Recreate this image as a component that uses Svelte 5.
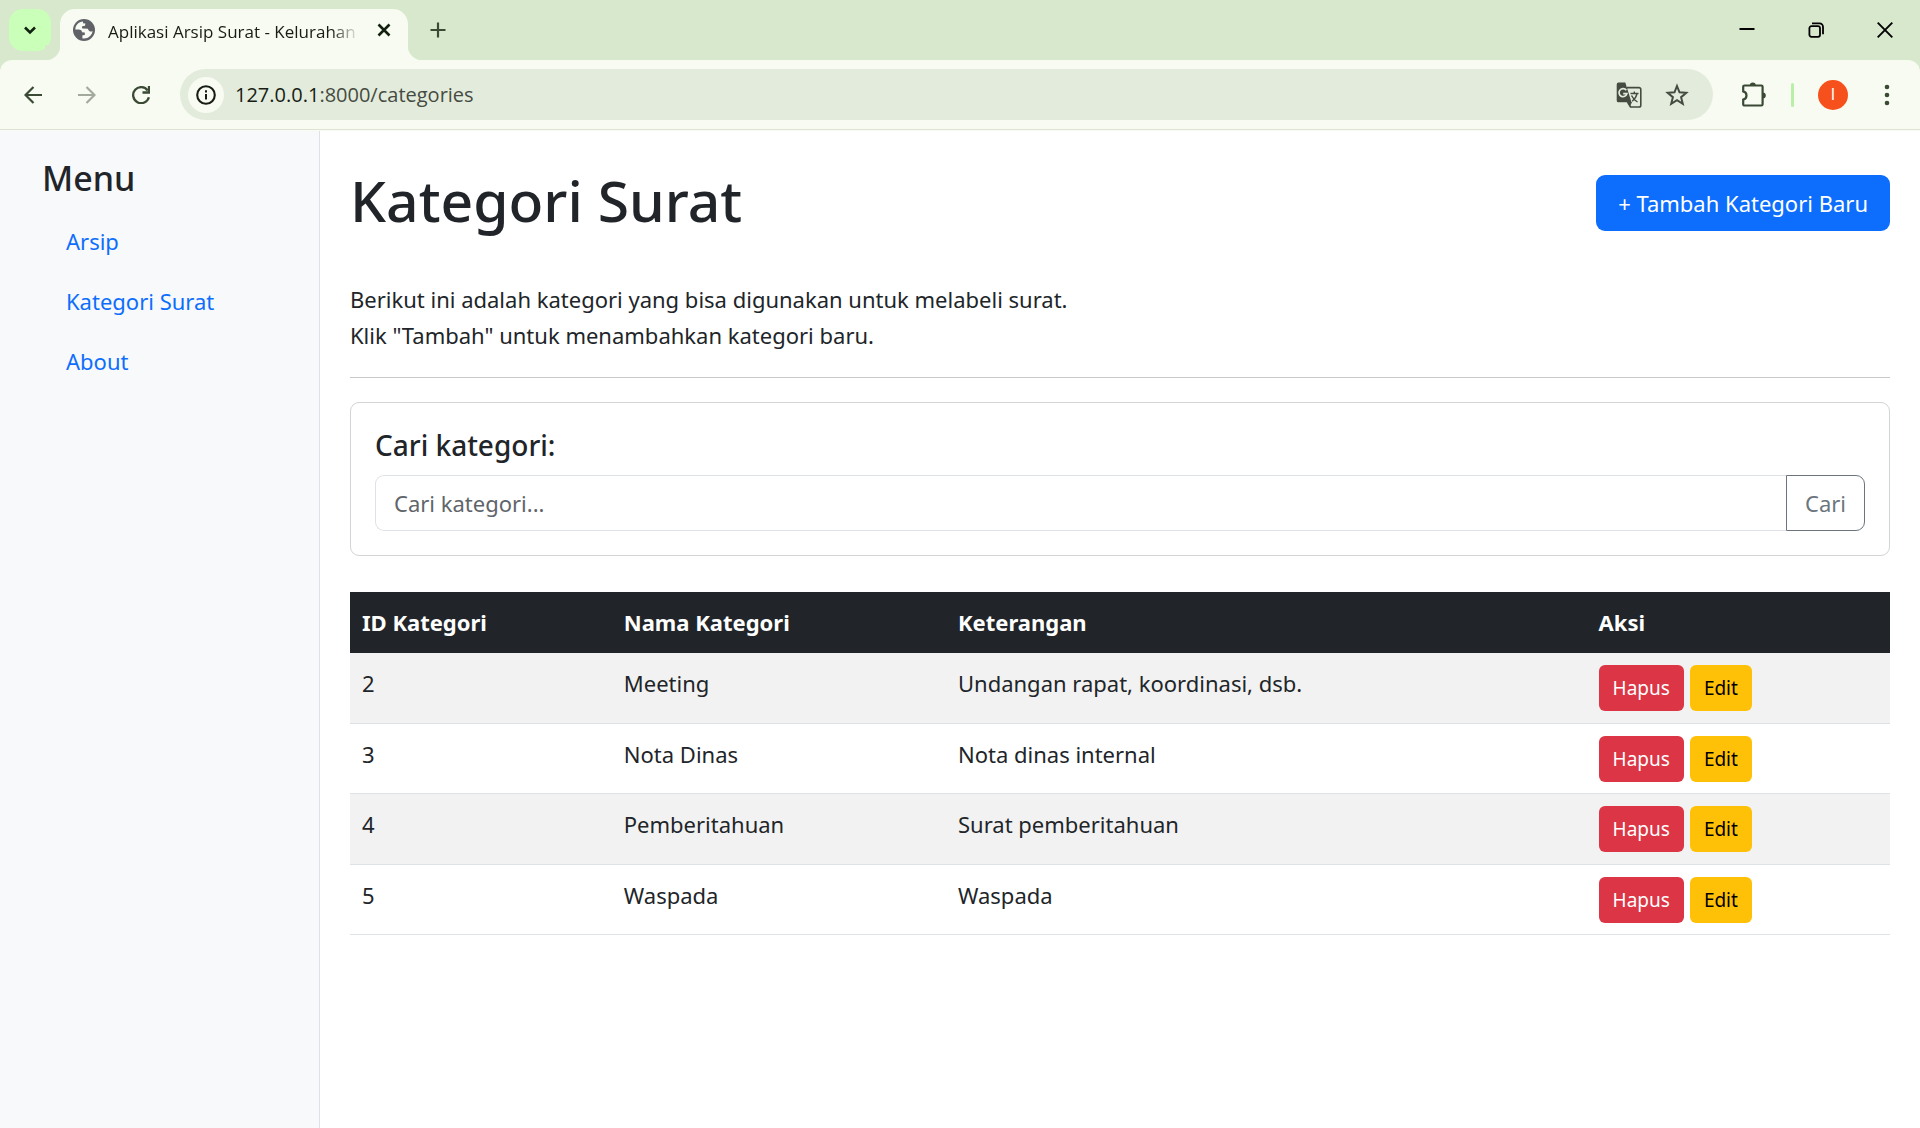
<script>
  const menu = [
    { label: 'Arsip', href: '#arsip' },
    { label: 'Kategori Surat', href: '#categories' },
    { label: 'About', href: '#about' },
  ];

  const categories = [
    { id: 2, name: 'Meeting', note: 'Undangan rapat, koordinasi, dsb.' },
    { id: 3, name: 'Nota Dinas', note: 'Nota dinas internal' },
    { id: 4, name: 'Pemberitahuan', note: 'Surat pemberitahuan' },
    { id: 5, name: 'Waspada', note: 'Waspada' },
  ];

  let query = $state('');
</script>

<div class="window">
  <header class="tabstrip">
    <button class="tab-search" aria-label="Search tabs">
      <svg width="14" height="14" viewBox="0 0 14 14"><path d="M2 4.5l5 5 5-5" fill="none" stroke="#12200f" stroke-width="2.6" /></svg>
    </button>
    <div class="tab">
      <svg class="favicon" width="22" height="22" viewBox="0 0 22 22">
        <circle cx="11" cy="11" r="11" fill="#5f6368" />
        <path d="M10 2.4C5.6 2.700 2.300 6.300 2.300 10.400L5.500 10.600C7.800 10.700 9 11.500 9 13.200L11.800 13.400L11.800 16L9.500 16.200L9.300 19.300C14.500 20.300 19 16.800 19.600 12C18.200 12.900 16.500 12.600 15.600 11.200L14.800 9.800L9.800 9.500C8.800 9.300 8.600 7.800 9.400 7.200L12 6.800L12.400 4.600L10 4.300Z" fill="#f8fbf1" />
      </svg>
      <span class="tab-title">Aplikasi Arsip Surat - Kelurahan</span>
      <button class="icon" aria-label="Close tab">
        <svg width="14" height="14" viewBox="0 0 14 14"><path d="M1.500 1.500l11 11M12.500 1.500l-11 11" stroke="#12200f" stroke-width="2.600" /></svg>
      </button>
    </div>
    <button class="icon new-tab" aria-label="New tab">
      <svg width="16" height="16" viewBox="0 0 16 16"><path d="M8 .5v15M.5 8h15" stroke="#3a4a35" stroke-width="2.200" /></svg>
    </button>
    <div class="window-controls">
      <button class="icon" aria-label="Minimize">
        <svg width="16" height="16" viewBox="0 0 16 16"><path d="M.5 7h15" stroke="#000" stroke-width="2" /></svg>
      </button>
      <button class="icon" aria-label="Restore">
        <svg width="16" height="16" viewBox="0 0 16 16" fill="none" stroke="#000" stroke-width="1.800"><rect x="1.400" y="4.200" width="10.600" height="10.600" rx="2" /><path d="M4 1.400h7.600a3.400 3.400 0 0 1 3.400 3.400v7.400" /></svg>
      </button>
      <button class="icon" aria-label="Close">
        <svg width="16" height="16" viewBox="0 0 16 16"><path d="M.7.7l14.600 14.600M15.300.7L.7 15.300" stroke="#000" stroke-width="1.900" /></svg>
      </button>
    </div>
  </header>

  <div class="toolbar-back">
    <nav class="toolbar" aria-label="Browser">
      <div class="nav-buttons">
        <button class="icon" aria-label="Back">
          <svg width="18" height="18" viewBox="0 0 18 18" fill="none" stroke="#3a4a35" stroke-width="2.200"><path d="M18 9H2M9.500 1L1.500 9l8 8" /></svg>
        </button>
        <button class="icon" aria-label="Forward">
          <svg width="18" height="18" viewBox="0 0 18 18" fill="none" stroke="#a3aa9d" stroke-width="2.200"><path d="M0 9h16M8.500 1l8 8-8 8" /></svg>
        </button>
        <button class="icon" aria-label="Reload">
          <svg width="18" height="18" viewBox="0 0 18 18" fill="none" stroke="#3a4a35" stroke-width="2.300"><path d="M15.700 4.500A8 8 0 1 0 16.900 11.200" /><path d="M17 0v6.500h-6.500" /></svg>
        </button>
      </div>
      <div class="address">
        <button class="site-info" aria-label="Site information">
          <svg width="20" height="20" viewBox="0 0 20 20"><circle cx="10" cy="10" r="8.800" fill="none" stroke="#171d14" stroke-width="2.100" /><path d="M10 9v5.500M10 5.300v2.200" stroke="#171d14" stroke-width="2" /></svg>
        </button>
        <span class="url"><span class="host">127.0.0.1</span>:8000/categories</span>
        <button class="icon" aria-label="Translate this page">
          <svg width="26" height="26" viewBox="0 0 26 26">
            <path d="M11 5.600h12a1.800 1.800 0 0 1 1.800 1.800v15.800a1.800 1.800 0 0 1-1.800 1.800H14.500L11.500 20" fill="none" stroke="#454b41" stroke-width="1.600" />
            <path d="M2.500.6H9.300L15.500 20.300H2.500A1.900 1.900 0 0 1 .7 18.400V2.500A1.900 1.900 0 0 1 2.500.6Z" fill="#454b41" />
            <path d="M12 20h4l-2 4.500z" fill="#454b41" />
            <path d="M10.300 8.300A4 4 0 1 0 10.900 11.600H7.200" fill="none" stroke="#e3ecdc" stroke-width="1.700" />
            <path d="M14.500 11.500h8M18.300 9.500v2M21 11.700c-.7 3.500-2.600 5.900-4.800 7.500M15.500 13.500c1.500 3.200 3.500 5 6 6.500" fill="none" stroke="#454b41" stroke-width="1.400" />
          </svg>
        </button>
        <button class="icon" aria-label="Bookmark this tab">
          <svg width="24" height="24" viewBox="0 0 24 24"><path d="M12 3l2.500 6.300 6.800.5-5.200 4.400 1.700 6.600L12 17.200l-5.800 3.600 1.700-6.600L2.700 9.800l6.800-.5z" fill="none" stroke="#454b41" stroke-width="2" /></svg>
        </button>
      </div>
      <button class="icon extensions" aria-label="Extensions">
        <svg width="26" height="26" viewBox="0 0 26 26">
          <path d="M3.500 3.500h16.800a1.300 1.300 0 0 1 1.300 1.300v17.400a1.300 1.300 0 0 1-1.300 1.300H3.500a1.300 1.300 0 0 1-1.300-1.300v-4.600a4.200 4.200 0 0 0 0-8.200V4.800A1.300 1.300 0 0 1 3.500 3.500z" fill="none" stroke="#3a4a35" stroke-width="2.200" />
          <path d="M8.800 3.500a3 3 0 0 1 6 0zM21.800 10.500a3 3 0 0 1 0 6z" fill="#3a4a35" />
        </svg>
      </button>
      <span class="divider"></span>
      <button class="avatar" aria-label="Profile">I</button>
      <button class="icon" aria-label="Browser menu">
        <svg width="6" height="22" viewBox="0 0 6 22" fill="#3a4a35"><circle cx="3" cy="3" r="2.300" /><circle cx="3" cy="11" r="2.300" /><circle cx="3" cy="19" r="2.300" /></svg>
      </button>
    </nav>
  </div>

  <div class="page">
    <aside class="sidebar">
      <h4>Menu</h4>
      <ul>
        {#each menu as item}
          <li><a href={item.href}>{item.label}</a></li>
        {/each}
      </ul>
    </aside>

    <main>
      <div class="heading">
        <h1>Kategori Surat</h1>
        <a class="btn-primary" href="#create">+ Tambah Kategori Baru</a>
      </div>
      <p>Berikut ini adalah kategori yang bisa digunakan untuk melabeli surat.<br />Klik "Tambah" untuk menambahkan kategori baru.</p>
      <hr />

      <form class="card" onsubmit={(e) => e.preventDefault()}>
        <label for="search">Cari kategori:</label>
        <div class="input-group">
          <input id="search" type="text" placeholder="Cari kategori..." bind:value={query} />
          <button type="submit">Cari</button>
        </div>
      </form>

      <table>
        <thead>
          <tr>
            <th class="col-id">ID Kategori</th>
            <th class="col-name">Nama Kategori</th>
            <th class="col-note">Keterangan</th>
            <th>Aksi</th>
          </tr>
        </thead>
        <tbody>
          {#each categories as category}
            <tr>
              <td>{category.id}</td>
              <td>{category.name}</td>
              <td>{category.note}</td>
              <td>
                <div class="actions">
                  <button class="delete">Hapus</button>
                  <a class="edit" href="#edit">Edit</a>
                </div>
              </td>
            </tr>
          {/each}
        </tbody>
      </table>
    </main>
  </div>
</div>

<style>
  :global(body) {
    margin: 0;
    background: #fff;
  }

  .window {
    display: flex;
    flex-direction: column;
    min-height: 100vh;
    font-family: 'Segoe UI', 'Noto Sans', 'Open Sans', sans-serif;
    font-size: 22px;
    line-height: 36px;
    color: #212529;
  }

  .window :global(*) {
    box-sizing: border-box;
  }

  button,
  input {
    font: inherit;
    margin: 0;
  }

  button {
    cursor: pointer;
  }

  svg {
    display: block;
  }

  .icon {
    display: flex;
    padding: 0;
    border: 0;
    background: none;
  }

  .tabstrip {
    display: flex;
    align-items: center;
    height: 60px;
    background: #d8e8cd;
  }

  .tab-search {
    display: grid;
    place-items: center;
    width: 42px;
    height: 42px;
    margin: 0 9px;
    padding: 0;
    border: 0;
    border-radius: 14px;
    background: #caffb9;
  }

  .tab {
    position: relative;
    display: flex;
    align-items: center;
    align-self: flex-end;
    gap: 13px;
    width: 348px;
    height: 51px;
    padding: 0 17px 9px 13px;
    border-radius: 15px 15px 0 0;
    background: #f8fbf1;
  }

  .tab::before,
  .tab::after {
    content: '';
    position: absolute;
    bottom: 0;
    width: 15px;
    height: 15px;
  }

  .tab::before {
    right: 100%;
    background: radial-gradient(circle at 0 0, #d8e8cd 15px, #f8fbf1 16px);
  }

  .tab::after {
    left: 100%;
    background: radial-gradient(circle at 100% 0, #d8e8cd 15px, #f8fbf1 16px);
  }

  .favicon {
    flex: none;
  }

  .tab-title {
    flex: 1;
    overflow: hidden;
    margin-right: 5px;
    padding-top: 3px;
    font-family: 'Segoe UI', 'Open Sans', sans-serif;
    font-size: 17px;
    line-height: 24px;
    white-space: nowrap;
    color: #171d14;
    mask-image: linear-gradient(to right, #000 89%, transparent);
  }

  .new-tab {
    margin-left: 22px;
  }

  .window-controls {
    display: flex;
    gap: 53px;
    margin-left: auto;
    padding-right: 27px;
  }

  .toolbar-back {
    background: #d8e8cd;
  }

  .toolbar {
    display: flex;
    align-items: center;
    height: 71px;
    padding: 0 30px 2px 24px;
    border-radius: 12px 12px 0 0;
    background: linear-gradient(#dde3d5, #dde3d5) left bottom 1px / 100% 1px no-repeat #f8fbf1;
  }

  .nav-buttons {
    display: flex;
    gap: 36px;
    margin-right: 30px;
  }

  .address {
    display: flex;
    flex: 1;
    align-items: center;
    gap: 23px;
    height: 51px;
    padding: 0 24px 0 8px;
    border-radius: 26px;
    background: #e3ecdc;
  }

  .site-info {
    display: grid;
    place-items: center;
    width: 36px;
    height: 36px;
    margin-right: -12px;
    padding: 0;
    border: 0;
    border-radius: 50%;
    background: #f8fbf1;
  }

  .url {
    flex: 1;
    font-family: 'Segoe UI', 'Open Sans', sans-serif;
    font-size: 20px;
    line-height: 28px;
    color: #454b41;
  }

  .host {
    color: #171d14;
  }

  .extensions {
    margin-left: 28px;
  }

  .divider {
    width: 3px;
    height: 24px;
    margin: 0 24px;
    border-radius: 2px;
    background: #b9f0a8;
  }

  .avatar {
    display: grid;
    place-items: center;
    width: 30px;
    height: 30px;
    margin-right: 36px;
    padding: 0;
    border: 0;
    border-radius: 50%;
    background: #f6511d;
    font-family: Roboto, sans-serif;
    font-size: 16px;
    line-height: 30px;
    color: #fff;
  }

  .page {
    display: flex;
    flex: 1;
  }

  .sidebar {
    width: 16.667%;
    padding: 24px 42px;
    border-right: 1px solid #dee2e6;
    background: #f8f9fb;
  }

  h4 {
    margin: 0 0 10px;
    font-size: 34px;
    font-weight: 500;
    line-height: 46px;
  }

  ul {
    margin: 0;
    padding: 0;
    list-style: none;
  }

  li a {
    display: block;
    padding: 12px 24px;
    color: #0d6efd;
    text-decoration: none;
  }

  main {
    flex: 1;
    padding: 36px 30px;
  }

  .heading {
    display: flex;
    align-items: flex-start;
    justify-content: space-between;
    margin-bottom: 48px;
  }

  h1 {
    margin: 0;
    font-size: 57px;
    font-weight: 500;
    line-height: 66px;
  }

  .btn-primary {
    margin-top: 8px;
    padding: 10px 22px;
    border-radius: 9px;
    background: #0d6efd;
    color: #fff;
    text-decoration: none;
  }

  p {
    margin: 0;
  }

  hr {
    margin: 24px 0;
    border: 0;
    border-top: 1px solid #c8c9ca;
  }

  .card {
    margin-bottom: 36px;
    padding: 24px;
    border: 1px solid #d3d4d5;
    border-radius: 9px;
  }

  label {
    display: block;
    margin-bottom: 12px;
    font-size: 28px;
    font-weight: 500;
    line-height: 36px;
  }

  .input-group {
    display: flex;
  }

  input {
    flex: 1;
    min-width: 0;
    height: 56px;
    padding: 0 18px;
    border: 1px solid #dee2e6;
    border-right: 0;
    border-radius: 9px 0 0 9px;
    background: #fff;
    color: #212529;
  }

  input::placeholder {
    color: #5f656a;
    opacity: 1;
  }

  .input-group button {
    padding: 0 18px;
    border: 1px solid #6c757d;
    border-radius: 0 9px 9px 0;
    background: #fff;
    color: #6c757d;
  }

  table {
    width: 100%;
    border-collapse: collapse;
    table-layout: fixed;
  }

  th,
  td {
    padding: 12px;
    text-align: left;
    vertical-align: top;
  }

  th {
    background: #212529;
    font-weight: 700;
    line-height: 37px;
    color: #fff;
  }

  td {
    height: 70px;
    padding-bottom: 11px;
    box-shadow: inset 0 -1px #dee2e6;
  }

  tbody tr:nth-child(odd) td {
    height: 71px;
    background: #f2f2f2;
  }

  .col-id {
    width: 17%;
  }

  .col-name {
    width: 21.7%;
  }

  .col-note {
    width: 41.6%;
  }

  .actions {
    display: flex;
    gap: 6px;
  }

  .delete,
  .edit {
    padding: 7px 14px;
    border: 0;
    border-radius: 6px;
    font-size: 19px;
    line-height: 32px;
    text-decoration: none;
  }

  .delete {
    background: #dc3545;
    color: #fff;
  }

  .edit {
    background: #ffc107;
    color: #000;
  }
</style>
